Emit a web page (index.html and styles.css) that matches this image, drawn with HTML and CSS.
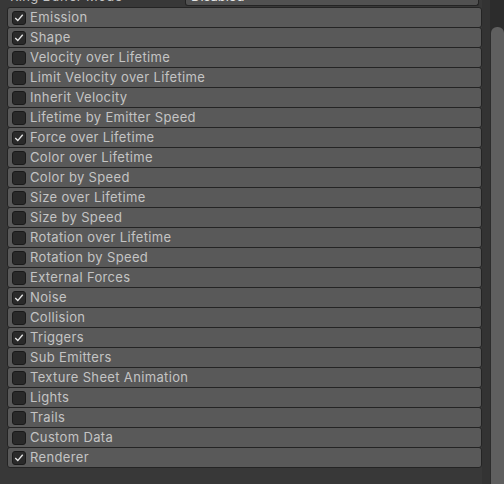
FILE: index.html
```html
<!DOCTYPE html>
<html>
<head>
<meta charset="utf-8">
<link rel="stylesheet" href="styles.css">
</head>
<body>
<div class="main">
  <div class="top">
    <div class="prop">
      <span class="prop-label">Ring Buffer Mode</span>
      <span class="dropdown">Disabled</span>
    </div>
  </div>
  <div class="modules">
    <div class="row"><span class="cb"><svg viewBox="0 0 14 14"><polyline points="3.2,7.6 5.6,10 10.8,3.8"/></svg></span><span class="name">Emission</span></div>
    <div class="row"><span class="cb"><svg viewBox="0 0 14 14"><polyline points="3.2,7.6 5.6,10 10.8,3.8"/></svg></span><span class="name">Shape</span></div>
    <div class="row"><span class="cb"></span><span class="name">Velocity over Lifetime</span></div>
    <div class="row"><span class="cb"></span><span class="name">Limit Velocity over Lifetime</span></div>
    <div class="row"><span class="cb"></span><span class="name">Inherit Velocity</span></div>
    <div class="row"><span class="cb"></span><span class="name">Lifetime by Emitter Speed</span></div>
    <div class="row"><span class="cb"><svg viewBox="0 0 14 14"><polyline points="3.2,7.6 5.6,10 10.8,3.8"/></svg></span><span class="name">Force over Lifetime</span></div>
    <div class="row"><span class="cb"></span><span class="name">Color over Lifetime</span></div>
    <div class="row"><span class="cb"></span><span class="name">Color by Speed</span></div>
    <div class="row"><span class="cb"></span><span class="name">Size over Lifetime</span></div>
    <div class="row"><span class="cb"></span><span class="name">Size by Speed</span></div>
    <div class="row"><span class="cb"></span><span class="name">Rotation over Lifetime</span></div>
    <div class="row"><span class="cb"></span><span class="name">Rotation by Speed</span></div>
    <div class="row"><span class="cb"></span><span class="name">External Forces</span></div>
    <div class="row"><span class="cb"><svg viewBox="0 0 14 14"><polyline points="3.2,7.6 5.6,10 10.8,3.8"/></svg></span><span class="name">Noise</span></div>
    <div class="row"><span class="cb"></span><span class="name">Collision</span></div>
    <div class="row"><span class="cb"><svg viewBox="0 0 14 14"><polyline points="3.2,7.6 5.6,10 10.8,3.8"/></svg></span><span class="name">Triggers</span></div>
    <div class="row"><span class="cb"></span><span class="name">Sub Emitters</span></div>
    <div class="row"><span class="cb"></span><span class="name">Texture Sheet Animation</span></div>
    <div class="row"><span class="cb"></span><span class="name">Lights</span></div>
    <div class="row"><span class="cb"></span><span class="name">Trails</span></div>
    <div class="row"><span class="cb"></span><span class="name">Custom Data</span></div>
    <div class="row"><span class="cb"><svg viewBox="0 0 14 14"><polyline points="3.2,7.6 5.6,10 10.8,3.8"/></svg></span><span class="name">Renderer</span></div>
  </div>
</div>
<div class="gutter"></div>
<div class="scrollbar"><div class="thumb"></div></div>
</body>
</html>
```

FILE: styles.css
```css
html, body {
  margin: 0;
  padding: 0;
}
body {
  width: 504px;
  height: 484px;
  overflow: hidden;
  background: #383838;
  display: flex;
  font-family: Inter, "Noto Sans", sans-serif;
  font-size: 13px;
  color: #c4c4c4;
}
.main {
  width: 482px;
  padding-left: 7px;
  box-sizing: border-box;
}
.top {
  height: 7px;
  overflow: hidden;
}
.prop {
  display: flex;
  align-items: center;
  height: 18px;
  margin-top: -13px;
}
.prop-label {
  width: 175px;
  padding-left: 3px;
  letter-spacing: 0.35px;
}
.dropdown {
  flex: 1;
  height: 17px;
  margin-right: 3px;
  background: #515151;
  border: 1px solid #242424;
  border-top-color: #303030;
  border-radius: 3px;
  padding-left: 5px;
  color: #e4e4e4;
  line-height: 17px;
}
.modules {
  display: flex;
  flex-direction: column;
}
.row {
  height: 21px;
  box-sizing: border-box;
  margin-bottom: -1px;
  background: #595959;
  border: 1px solid #242424;
  border-radius: 3px;
  display: flex;
  align-items: center;
  padding-left: 4px;
  gap: 4px;
}
.cb {
  width: 14px;
  height: 14px;
  box-sizing: border-box;
  background: #2a2a2a;
  border: 1px solid #1a1a1a;
  border-radius: 3px;
  flex: none;
  display: flex;
}
.cb svg {
  width: 12px;
  height: 12px;
  fill: none;
  stroke: #e8e8e8;
  stroke-width: 1.6;
  stroke-linecap: square;
}
.name {
  letter-spacing: 0.35px;
  line-height: 18px;
  padding-bottom: 1px;
}
.gutter {
  width: 8px;
  background: #333333;
}
.scrollbar {
  width: 14px;
  background: #2c2c2c;
  padding-top: 27px;
  box-sizing: border-box;
  display: flex;
  justify-content: flex-end;
}
.thumb {
  width: 13px;
  background: #5f5f5f;
  border-radius: 6px 6px 0 0;
}
```
